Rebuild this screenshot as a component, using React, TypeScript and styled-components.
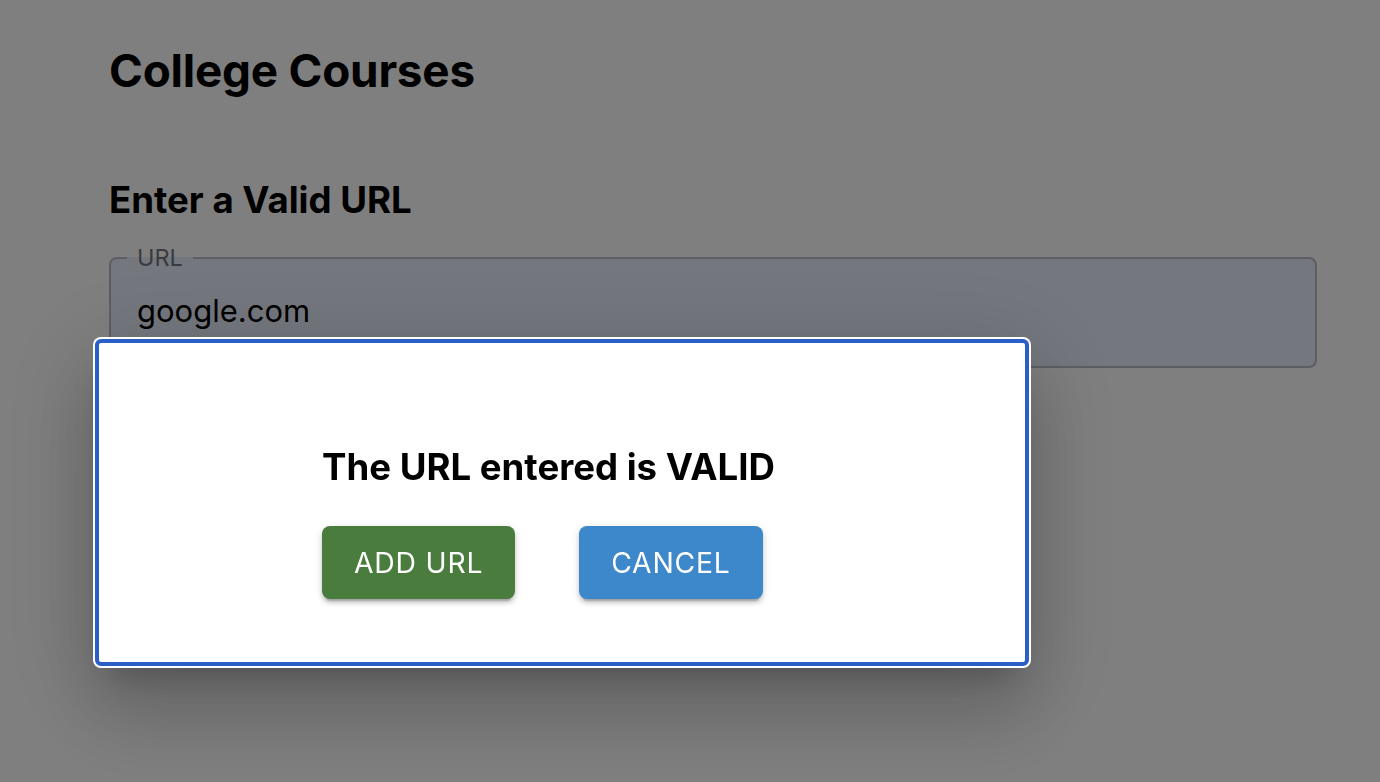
import React from "react";
import styled, { createGlobalStyle } from "styled-components";

const GlobalStyle = createGlobalStyle`
  html, body {
    margin: 0;
    padding: 0;
    background: #ffffff;
  }
  body {
    font-family: Inter, "Noto Sans", Roboto, sans-serif;
    color: #000;
  }
  * { box-sizing: border-box; }
`;

const Page = styled.main`
  display: flex;
  flex-direction: column;
  padding: 43px 63px 0 109px;
  min-height: 782px;
`;

const Title = styled.h1`
  margin: 0;
  font-size: 45.8px;
  line-height: 56px;
  font-weight: 700;
  letter-spacing: -0.2px;
`;

const SubTitle = styled.h2`
  margin: 79px 0 0;
  font-size: 36.6px;
  line-height: 44px;
  font-weight: 700;
`;

const Field = styled.fieldset`
  margin: 24px 0 0;
  padding: 21px 26px 0 26px;
  height: 122px;
  border: 2px solid #babdc4;
  border-radius: 8px;
  background: #e9eefc;
`;

const Legend = styled.legend`
  margin-left: -10px;
  padding: 0 10px;
  font-size: 23.5px;
  line-height: 24px;
  color: #74777e;
`;

const Input = styled.input`
  display: block;
  width: 100%;
  border: none;
  background: transparent;
  outline: none;
  padding: 0;
  margin: 0;
  font-family: inherit;
  font-size: 31px;
  line-height: 40px;
  height: 40px;
  color: #000;
`;

const Overlay = styled.div`
  position: fixed;
  inset: 0;
  background: rgba(0, 0, 0, 0.5);
  display: flex;
  align-items: flex-start;
  justify-content: flex-start;
  padding: 339px 0 0 95px;
`;

const Dialog = styled.div`
  width: 934px;
  height: 327px;
  background: #ffffff;
  border: 4px solid #2a5fc8;
  border-radius: 6px;
  box-shadow:
    0 0 0 2px #ffffff,
    0 22px 30px -14px rgba(0, 0, 0, 0.2),
    0 48px 76px 6px rgba(0, 0, 0, 0.14),
    0 18px 92px 16px rgba(0, 0, 0, 0.12);
  display: flex;
  flex-direction: column;
  padding: 102px 0 0 223px;
`;

const Message = styled.p`
  margin: 0;
  font-size: 36.6px;
  line-height: 44px;
  font-weight: 700;
`;

const Actions = styled.div`
  display: flex;
  gap: 64px;
  margin-top: 37px;
`;

const ActionButton = styled.button<{ $tone: "green" | "blue" }>`
  height: 73px;
  padding: 0 32px;
  border: none;
  border-radius: 8px;
  background: ${(p) => (p.$tone === "green" ? "#4a7c3e" : "#3d87cb")};
  color: #ffffff;
  font-family: inherit;
  font-size: 28.3px;
  font-weight: 400;
  letter-spacing: 0.8px;
  text-transform: uppercase;
  cursor: pointer;
  box-shadow:
    0 6px 2px -4px rgba(0, 0, 0, 0.2),
    0 4px 4px 0 rgba(0, 0, 0, 0.14),
    0 2px 10px 0 rgba(0, 0, 0, 0.12);
`;

export default function App() {
  return (
    <>
      <GlobalStyle />
      <Page>
        <Title>College Courses</Title>
        <SubTitle>Enter a Valid URL</SubTitle>
        <Field>
          <Legend>URL</Legend>
          <Input defaultValue="google.com" readOnly />
        </Field>
      </Page>
      <Overlay>
        <Dialog role="dialog">
          <Message>The URL entered is VALID</Message>
          <Actions>
            <ActionButton $tone="green">Add URL</ActionButton>
            <ActionButton $tone="blue">Cancel</ActionButton>
          </Actions>
        </Dialog>
      </Overlay>
    </>
  );
}
